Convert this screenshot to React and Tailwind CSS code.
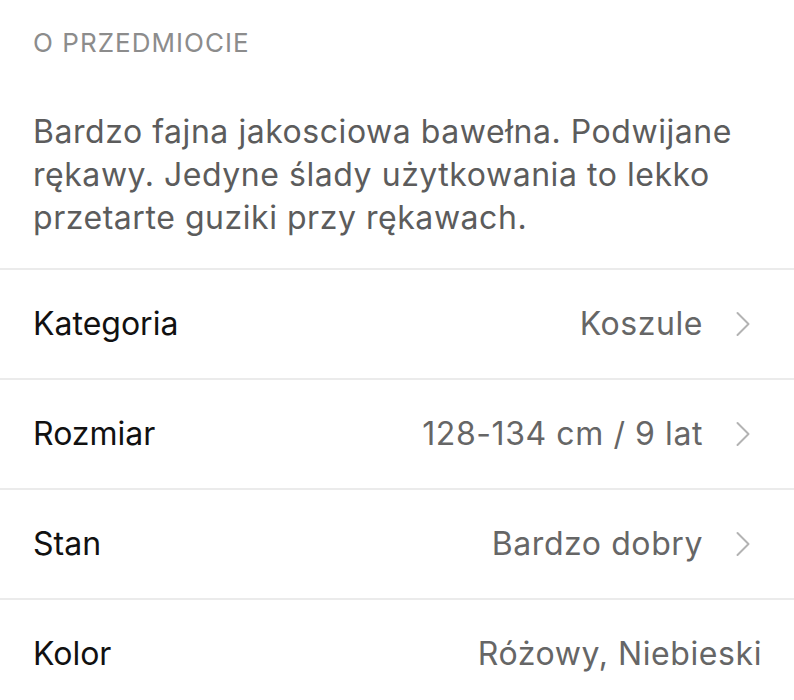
import { ChevronRight } from 'lucide-react'

const DETAILS = [
  { label: 'Kategoria', value: 'Koszule', link: true },
  { label: 'Rozmiar', value: '128-134 cm / 9 lat', link: true },
  { label: 'Stan', value: 'Bardzo dobry', link: true },
  { label: 'Kolor', value: 'Różowy, Niebieski', link: false },
]

export default function App() {
  return (
    <div className="min-h-[700px] bg-white font-['Inter',sans-serif]">
      {/* Description */}
      <div className="px-[33px] pb-[29px]">
        <div className="pt-[26px] text-[26px] leading-[34px] tracking-[0.04em] text-[#8c8c8c]">O PRZEDMIOCIE</div>
        <p className="mt-[50px] text-[32px] leading-[43px] tracking-[0.017em] text-[#5c5c5c]">
          Bardzo fajna jakosciowa bawełna. Podwijane rękawy. Jedyne ślady użytkowania to lekko przetarte guziki przy rękawach.
        </p>
      </div>

      {/* Attributes */}
      {DETAILS.map(row => (
        <div key={row.label} className="flex h-[110px] items-center border-t-2 border-[#ebebeb] pl-[33px] pr-[32px]">
          <span className="text-[32px] text-[#111]">{row.label}</span>
          <span className="ml-auto text-[32px] tracking-[0.018em] text-[#666]">{row.value}</span>
          {row.link && (
            <ChevronRight size={44} strokeWidth={1.1} className="ml-[18px] -mr-[3px] text-[#b3b3b3]" />
          )}
        </div>
      ))}
    </div>
  )
}
